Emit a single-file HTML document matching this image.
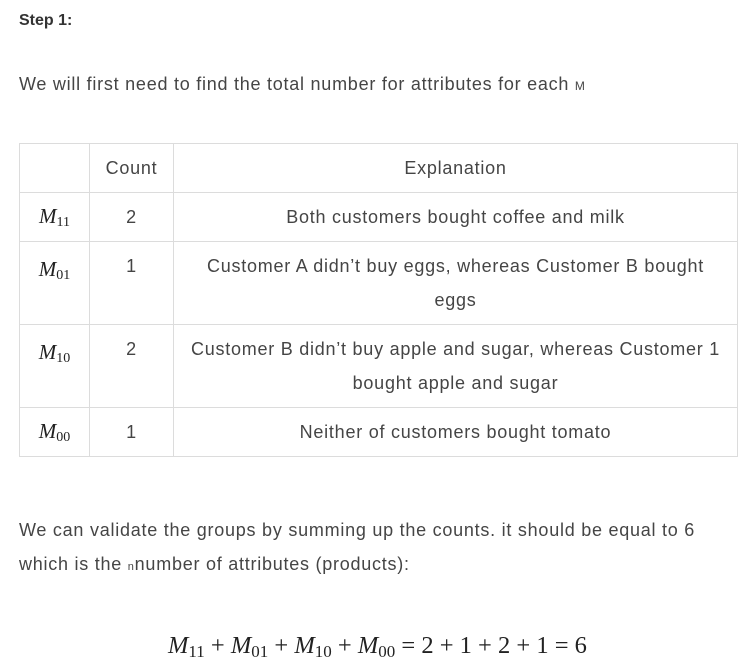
<!DOCTYPE html>
<html><head><style>
body{margin:0;background:#fff;width:743px;height:671px;overflow:hidden;font-family:"Liberation Sans",sans-serif;color:#454545;font-size:18px;letter-spacing:0.75px;}
.a{position:absolute;white-space:nowrap}
table{position:absolute;left:19px;top:143px;border-collapse:collapse;width:719px;}
td{border:1px solid #dcdcdc;text-align:center;line-height:34px;padding:0;}
.m{font-family:"Liberation Serif",serif;font-style:italic;font-size:21px;color:#222;letter-spacing:0;position:relative;top:2px}
.m sub{font-style:normal;font-size:14px;vertical-align:-3px}
.eq{font-family:"Liberation Serif",serif;font-size:24.5px;color:#222;letter-spacing:0}
.eq sub{font-size:17px;vertical-align:-4px}
</style></head><body>
<div class="a" style="left:19px;top:12px;font-weight:bold;font-size:16px;color:#333;letter-spacing:0">Step 1:</div>
<div class="a" style="left:19px;top:74px">We will first need to find the total number for attributes for each <span style="font-size:12px">M</span></div>
<table>
<tr style="height:49px"><td style="width:69px"></td><td style="width:83px">Count</td><td>Explanation</td></tr>
<tr style="height:49px"><td><span class="m">M<sub>11</sub></span></td><td>2</td><td>Both customers bought coffee and milk</td></tr>
<tr style="height:83px"><td style="vertical-align:top;padding-top:8px"><span class="m">M<sub>01</sub></span></td><td style="vertical-align:top;padding-top:7px">1</td><td>Customer A didn’t buy eggs, whereas Customer B bought<br>eggs</td></tr>
<tr style="height:83px"><td style="vertical-align:top;padding-top:8px"><span class="m">M<sub>10</sub></span></td><td style="vertical-align:top;padding-top:7px">2</td><td>Customer B didn’t buy apple and sugar, whereas Customer 1<br>bought apple and sugar</td></tr>
<tr style="height:49px"><td><span class="m">M<sub>00</sub></span></td><td>1</td><td>Neither of customers bought tomato</td></tr>
</table>
<div class="a" style="left:19px;top:513px;line-height:34px">We can validate the groups by summing up the counts. it should be equal to 6<br>which is the <span style="font-size:11px">n</span>number of attributes (products):</div>
<div class="a eq" style="left:168px;top:632px"><i>M</i><sub>11</sub> + <i>M</i><sub>01</sub> + <i>M</i><sub>10</sub> + <i>M</i><sub>00</sub> = 2 + 1 + 2 + 1 = 6</div>
</body></html>
